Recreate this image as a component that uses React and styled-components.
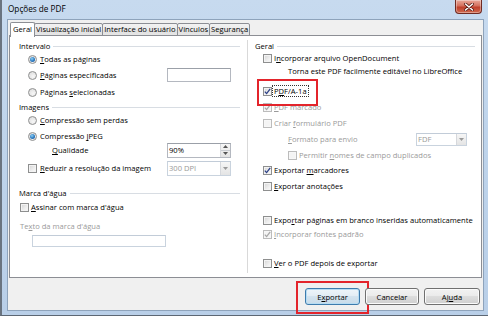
import React from 'react';
import styled, { createGlobalStyle, css } from 'styled-components';

const Global = createGlobalStyle`
  html, body { margin: 0; padding: 0; }
  body {
    width: 488px; height: 316px; overflow: hidden; background: #fff;
    font-family: "Open Sans", "Noto Sans", sans-serif;
    font-size: 7.6px; color: #000;
  }
  * { box-sizing: border-box; }
`;

const Window = styled.div`
  width: 488px;
  height: 316px;
  display: flex;
  flex-direction: column;
  background: linear-gradient(180deg, #c7daef 0%, #bfd4eb 40%, #b9cfe8 100%);
  border-left: 2px solid #6a7480;
  border-bottom: 1px solid #5d6773;
  padding: 0 4px 4px 5px;
`;

const TitleBar = styled.div`
  height: 19px;
  flex: none;
  display: flex;
  align-items: flex-start;
  padding-left: 1px;
`;

const Title = styled.div`
  font-size: 8.2px;
  line-height: 18px;
  color: #000;
`;

const Close = styled.div`
  margin-left: auto;
  margin-right: 2px;
  width: 27px;
  height: 14px;
  border: 1px solid #6f2a22;
  border-top: none;
  border-radius: 0 0 4px 4px;
  background: linear-gradient(180deg, #e9a99b 0%, #d4705d 45%, #c0402c 55%, #cf6a4f 100%);
  box-shadow: inset 0 0 0 1px rgba(255,255,255,0.35);
  display: flex;
  align-items: center;
  justify-content: center;
`;

const Client = styled.div`
  flex: 1;
  display: flex;
  flex-direction: column;
  background: #f0f0f0;
  border: 1px solid #8ea3bb;
  padding: 0 1px 0 1px;
`;

const TabStrip = styled.div`
  height: 16px;
  flex: none;
  display: flex;
  align-items: flex-end;
  padding-left: 1px;
  position: relative;
  z-index: 1;
`;

const Tab = styled.div`
  height: ${p => (p.$active ? 15 : 13)}px;
  padding: 0 ${p => (p.$active ? 2 : 1)}px;
  margin-left: ${p => (p.$active ? 0 : -1)}px;
  border: 1px solid #8c8e94;
  border-bottom: ${p => (p.$active ? 'none' : '1px solid #8c8e94')};
  border-radius: 2px 2px 0 0;
  background: ${p => (p.$active ? '#fff' : 'linear-gradient(180deg, #f2f2f2 0%, #ebebeb 50%, #dfdfdf 51%, #e6e6e6 100%)')};
  line-height: ${p => (p.$active ? 13 : 11)}px;
  color: #000;
  white-space: nowrap;
  margin-bottom: ${p => (p.$active ? -1 : 0)}px;
  z-index: ${p => (p.$active ? 2 : 1)};
  position: relative;
  &:first-child { margin-left: 0; }
`;

const Panel = styled.div`
  height: 243px;
  flex: none;
  background: #fff;
  border: 1px solid #8c8e94;
  margin-top: -1px;
  display: grid;
  grid-template-columns: 237px 1px 1fr;
`;

const Divider = styled.div`
  background: #d9d9d9;
  margin: 4px 0 4px;
`;

const Column = styled.div`
  display: flex;
  flex-direction: column;
`;

const Header = styled.div`
  height: 14px;
  display: flex;
  align-items: center;
  gap: 3px;
  margin-top: ${p => p.$top || 0}px;
  padding-left: ${p => p.$indent}px;
  padding-right: ${p => p.$right}px;
  color: #000;
  white-space: nowrap;
  &::after {
    content: '';
    flex: 1;
    height: 1px;
    background: #d8dde3;
    margin-top: 1px;
  }
`;

const Row = styled.div`
  height: 14px;
  flex: none;
  display: flex;
  align-items: center;
  margin-top: ${p => p.$top || 0}px;
  padding-left: ${p => p.$indent || 0}px;
  padding-right: ${p => p.$right || 0}px;
  white-space: nowrap;
  color: ${p => (p.$disabled ? '#9a9a9a' : '#000')};
`;

const Label = styled.span`
  margin-left: ${p => (p.$gap != null ? p.$gap : 0)}px;
  ${p => p.$focus && css`
    outline: 1px dotted #333;
    outline-offset: 0px;
    padding: 0 1px;
  `}
`;

const Key = styled.u`
  text-decoration-thickness: 1px;
  text-underline-offset: 1px;
`;

const Box = styled.span`
  width: 9px;
  height: 9px;
  flex: none;
  border: 1px solid ${p => (p.$disabled ? '#bcbcbc' : '#8e8f8f')};
  background: ${p => (p.$disabled ? '#f4f4f4' : 'linear-gradient(135deg, #d3d3d3 0%, #eeeeee 60%, #fbfbfb 100%)')};
  box-shadow: inset 0 0 0 1px ${p => (p.$disabled ? '#f7f7f7' : '#f3f3f3')};
  display: inline-flex;
  align-items: center;
  justify-content: center;
`;

const RadioDot = styled.span`
  width: 9px;
  height: 9px;
  flex: none;
  border-radius: 50%;
  border: 1px solid #8e8f8f;
  background: radial-gradient(circle at 60% 65%, #f7f7f7 0%, #d9d9d9 100%);
  display: inline-flex;
  align-items: center;
  justify-content: center;
  &::after {
    content: '';
    width: 5px;
    height: 5px;
    border-radius: 50%;
    background: radial-gradient(circle at 40% 35%, #8fd0f3 0%, #2a7ac2 55%, #1c4f8c 100%);
    display: ${p => (p.$on ? 'block' : 'none')};
  }
`;

const Highlight = styled.span`
  position: relative;
  display: inline-flex;
  align-items: center;
  height: 14px;
  &::before {
    content: '';
    position: absolute;
    left: ${p => p.$l}px;
    top: ${p => p.$t}px;
    width: ${p => p.$w}px;
    height: ${p => p.$h}px;
    border: 2px solid #e3242b;
    pointer-events: none;
  }
`;

const TextField = styled.span`
  display: inline-flex;
  align-items: center;
  width: ${p => p.$w}px;
  height: ${p => p.$h}px;
  margin-left: ${p => (p.$ml != null ? `${p.$ml}px` : 'auto')};
  background: #fff;
  border: 1px solid ${p => (p.$disabled ? '#c9d3de' : '#b4b8c0')};
  border-top-color: ${p => (p.$disabled ? '#c2ccd8' : '#9ba0a8')};
  padding-left: 1px;
  color: ${p => (p.$disabled ? '#9a9a9a' : '#000')};
  position: relative;
`;

const SideButton = styled.span`
  margin-left: auto;
  width: 10px;
  height: 100%;
  display: flex;
  flex-direction: column;
  border-left: 1px solid #d6d8dc;
  background: linear-gradient(180deg, #f6f6f6, #e4e4e4);
  align-items: center;
  justify-content: center;
`;

const SpinHalf = styled.span`
  flex: 1;
  width: 100%;
  display: flex;
  align-items: center;
  justify-content: center;
  border-bottom: ${p => (p.$top ? '1px solid #c9ccd1' : 'none')};
`;

const ButtonBar = styled.div`
  height: 32px;
  flex: none;
  display: flex;
  justify-content: flex-end;
  align-items: flex-start;
  gap: 5px;
  padding: 10px 2px 0 0;
`;

const Button = styled.button`
  width: ${p => p.$w}px;
  height: 17px;
  padding: 0;
  font: inherit;
  color: #000;
  border-radius: 3px;
  border: 1px solid ${p => (p.$default ? '#3d7bad' : '#707070')};
  background: ${p => (p.$default
    ? 'linear-gradient(180deg, #eef5fa 0%, #e3edf5 45%, #d3e3ef 50%, #c8dbe9 100%)'
    : 'linear-gradient(180deg, #f2f2f2 0%, #ebebeb 45%, #dddddd 50%, #cfcfcf 100%)')};
  box-shadow: inset 0 0 0 1px ${p => (p.$default ? '#b6dcf3' : '#fbfbfb')};
  position: relative;
`;

const BtnHighlight = styled.span`
  position: relative;
  display: inline-flex;
  &::before {
    content: '';
    position: absolute;
    left: -9px;
    top: -7px;
    width: 69px;
    height: 29px;
    border: 2px solid #e3242b;
    pointer-events: none;
  }
`;

const Check = ({ color }) => (
  <svg width="7" height="7" viewBox="0 0 7 7">
    <path d="M0.8 3.6 L2.6 5.6 L6.2 0.8" fill="none" stroke={color} strokeWidth="1.3" />
  </svg>
);

const CheckBox = ({ checked, disabled }) => (
  <Box $disabled={disabled}>{checked && <Check color={disabled ? '#a8a8a8' : '#2b3f86'} />}</Box>
);

const ArrowDown = ({ color = '#444' }) => (
  <svg width="5" height="3" viewBox="0 0 5 3"><path d="M0 0 H5 L2.5 3 Z" fill={color} /></svg>
);
const ArrowUp = ({ color = '#444' }) => (
  <svg width="5" height="3" viewBox="0 0 5 3"><path d="M0 3 H5 L2.5 0 Z" fill={color} /></svg>
);

export default function App() {
  return (
    <>
      <Global />
      <Window>
        <TitleBar>
          <Title>Opções de PDF</Title>
          <Close>
            <svg width="10" height="8" viewBox="0 0 10 8">
              <path d="M1.5 1 L8.5 7 M8.5 1 L1.5 7" stroke="#5a1a12" strokeWidth="3" strokeLinecap="round" />
              <path d="M1.5 1 L8.5 7 M8.5 1 L1.5 7" stroke="#fff" strokeWidth="1.6" strokeLinecap="round" />
            </svg>
          </Close>
        </TitleBar>
        <Client>
          <TabStrip>
            <Tab $active>Geral</Tab>
            <Tab>Visualização inicial</Tab>
            <Tab>Interface do usuário</Tab>
            <Tab>Vínculos</Tab>
            <Tab>Segurança</Tab>
          </TabStrip>
          <Panel>
            <Column>
              <Header $top={3} $indent={9} $right={7}>Intervalo</Header>
              <Row $top={-1} $indent={18}>
                <RadioDot $on /><Label $gap={3}><Key>T</Key>odas as páginas</Label>
              </Row>
              <Row $top={2} $indent={18} $right={16}>
                <RadioDot /><Label $gap={3}><Key>P</Key>áginas especificadas</Label>
                <TextField $w={64} $h={14} />
              </Row>
              <Row $top={3} $indent={18}>
                <RadioDot /><Label $gap={3}>Páginas <Key>s</Key>elecionadas</Label>
              </Row>
              <Header $top={1} $indent={9} $right={7}>Imagens</Header>
              <Row $top={-1} $indent={18}>
                <RadioDot /><Label $gap={3}><Key>C</Key>ompressão sem perdas</Label>
              </Row>
              <Row $top={2} $indent={18}>
                <RadioDot $on /><Label $gap={3}>Compressão <Key>J</Key>PEG</Label>
              </Row>
              <Row $top={0} $indent={42} $right={16}>
                <Label><Key>Q</Key>ualidade</Label>
                <TextField $w={64} $h={15}>
                  90%
                  <SideButton>
                    <SpinHalf $top><ArrowUp color="#555" /></SpinHalf>
                    <SpinHalf><ArrowDown color="#555" /></SpinHalf>
                  </SideButton>
                </TextField>
              </Row>
              <Row $top={4} $indent={18} $right={16}>
                <CheckBox /><Label $gap={3}><Key>R</Key>eduzir a resolução da imagem</Label>
                <TextField $w={64} $h={15} $disabled>
                  300 DPI
                  <SideButton><ArrowDown color="#999" /></SideButton>
                </TextField>
              </Row>
              <Header $top={11} $indent={9} $right={7}>Marca d'água</Header>
              <Row $top={0} $indent={10}>
                <CheckBox /><Label $gap={2}><Key>A</Key>ssinar com marca d'água</Label>
              </Row>
              <Row $top={5} $indent={10} $disabled>
                <Label>Te<Key>x</Key>to da marca d'água</Label>
              </Row>
              <Row $top={1} $indent={22}>
                <TextField $w={134} $h={12} $ml={0} $disabled />
              </Row>
            </Column>
            <Divider />
            <Column>
              <Header $top={3} $indent={7} $right={6}>Geral</Header>
              <Row $top={-2} $indent={15}>
                <CheckBox /><Label $gap={2}>I<Key>n</Key>corporar arquivo OpenDocument</Label>
              </Row>
              <Row $top={-1} $indent={40}>
                <Label>Torna este PDF facilmente editável no LibreOffice</Label>
              </Row>
              <Row $top={6} $indent={15}>
                <Highlight $l={-6} $t={-5} $w={57} $h={23}>
                  <CheckBox checked /><Label $gap={1} $focus>P<Key>D</Key>F/A-1a</Label>
                </Highlight>
              </Row>
              <Row $top={2} $indent={15} $disabled>
                <CheckBox checked disabled /><Label $gap={2}><Key>P</Key>DF marcado</Label>
              </Row>
              <Row $top={2} $indent={15} $disabled>
                <CheckBox disabled /><Label $gap={2}>Criar <Key>f</Key>ormulário PDF</Label>
              </Row>
              <Row $top={2} $indent={40} $right={14} $disabled>
                <Label><Key>F</Key>ormato para envio</Label>
                <TextField $w={51} $h={13} $disabled>
                  FDF
                  <SideButton><ArrowDown color="#999" /></SideButton>
                </TextField>
              </Row>
              <Row $top={2} $indent={40} $disabled>
                <CheckBox disabled /><Label $gap={2}>Permitir <Key>n</Key>omes de campo duplicados</Label>
              </Row>
              <Row $top={1} $indent={15}>
                <CheckBox checked /><Label $gap={2}>Exportar <Key>m</Key>arcadores</Label>
              </Row>
              <Row $top={2} $indent={15}>
                <CheckBox /><Label $gap={2}><Key>E</Key>xportar anotações</Label>
              </Row>
              <Row $top={20} $indent={15}>
                <CheckBox /><Label $gap={2}>Expo<Key>r</Key>tar páginas em branco inseridas automaticamente</Label>
              </Row>
              <Row $top={0} $indent={15} $disabled>
                <CheckBox checked disabled /><Label $gap={2}><Key>I</Key>ncorporar fontes padrão</Label>
              </Row>
              <Row $top={15} $indent={15}>
                <CheckBox /><Label $gap={2}><Key>V</Key>er o PDF depois de exportar</Label>
              </Row>
            </Column>
          </Panel>
          <ButtonBar>
            <BtnHighlight>
              <Button $w={55} $default>E<Key>x</Key>portar</Button>
            </BtnHighlight>
            <Button $w={54}>Cancelar</Button>
            <Button $w={56}>Aj<Key>u</Key>da</Button>
          </ButtonBar>
        </Client>
      </Window>
    </>
  );
}
